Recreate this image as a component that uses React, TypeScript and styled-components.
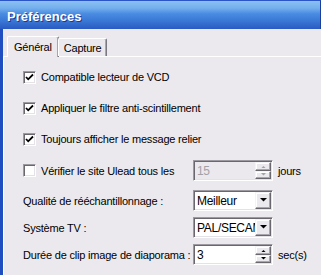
import React from "react";
import styled, { createGlobalStyle } from "styled-components";

const GlobalStyle = createGlobalStyle`
  html, body {
    margin: 0;
    padding: 0;
    overflow: hidden;
    background: #ebe9ed;
  }
  * {
    box-sizing: border-box;
  }
`;

const Window = styled.div`
  width: 321px;
  height: 275px;
  display: flex;
  flex-direction: column;
  background: #ebe9ed;
  font-family: "Liberation Sans", Arial, sans-serif;
  font-size: 11px;
  letter-spacing: -0.2px;
  color: #000;
  overflow: hidden;
`;

const TitleBar = styled.div`
  height: 29px;
  flex: 0 0 29px;
  display: flex;
  align-items: center;
  padding: 3px 0 0 7px;
  border-top: 1px solid #2a55c6;
  border-right: 1px solid #1c3f9e;
  background: linear-gradient(
    180deg,
    #8cc0f2 0%,
    #74b0ee 25%,
    #4a8ce2 45%,
    #3a78d6 70%,
    #2a5ac2 100%
  );
`;

const TitleText = styled.span`
  font-family: "Liberation Sans", Arial, sans-serif;
  font-weight: bold;
  font-size: 13px;
  letter-spacing: 0;
  color: #ffffff;
  text-shadow: 1px 1px 0 #1a3a94;
`;

const Body = styled.div`
  flex: 1;
  display: flex;
  flex-direction: column;
  padding-top: 7px;
  border-left: 3px solid #1f4ec0;
`;

const TabStrip = styled.div`
  display: flex;
  align-items: flex-end;
  padding-left: 4px;
  height: 20px;
  position: relative;
  z-index: 1;
`;

const Tab = styled.div<{ $active?: boolean }>`
  display: flex;
  align-items: center;
  justify-content: center;
  height: ${(p) => (p.$active ? "21px" : "18px")};
  margin-bottom: ${(p) => (p.$active ? "-1px" : "0")};
  padding: ${(p) => (p.$active ? "0 6px 1px 6px" : "0 5px")};
  background: #ebe9ed;
  border-top: 1px solid #ffffff;
  border-left: 1px solid #ffffff;
  border-right: 1px solid #7a7880;
  box-shadow: inset -1px 0 0 #a8a6ac;
  border-radius: 2px 2px 0 0;
  margin-left: ${(p) => (p.$active ? "0" : "-1px")};
`;

const Panel = styled.div`
  flex: 1;
  border-top: 1px solid #ffffff;
  border-left: 1px solid #ffffff;
  padding: 10px 0 0 19px;
  display: flex;
  flex-direction: column;
`;

const Section = styled.div<{ $gap: number; $top?: number }>`
  display: flex;
  flex-direction: column;
  gap: ${(p) => p.$gap}px;
  margin-top: ${(p) => p.$top ?? 0}px;
`;

const CheckRow = styled.label`
  display: flex;
  align-items: center;
  gap: 5px;
  height: 20px;
  white-space: nowrap;
`;

const FormRow = styled.div`
  display: grid;
  grid-template-columns: 165px 80px auto;
  column-gap: 5px;
  align-items: center;
  height: 21px;
`;

const RowLabel = styled.span`
  white-space: nowrap;
`;

const Box = styled.span`
  width: 13px;
  height: 13px;
  flex: 0 0 13px;
  display: flex;
  align-items: center;
  justify-content: center;
  background: #ffffff;
  border: 1px solid;
  border-color: #9c9aa0 #ffffff #ffffff #9c9aa0;
  box-shadow: inset 1px 1px 0 #6a686e, inset -1px -1px 0 #e4e2e6;
`;

const Sunken = styled.div<{ $disabled?: boolean }>`
  height: 21px;
  width: 80px;
  display: flex;
  align-items: stretch;
  background: ${(p) => (p.$disabled ? "#ebe9ed" : "#ffffff")};
  border: 1px solid;
  border-color: #9c9aa0 #ffffff #ffffff #9c9aa0;
  box-shadow: inset 1px 1px 0 #6a686e, inset -1px -1px 0 #e4e2e6;
  padding: 1px;
`;

const FieldText = styled.span<{ $disabled?: boolean }>`
  flex: 1;
  min-width: 0;
  overflow: hidden;
  white-space: nowrap;
  padding: 2px 0 0 2px;
  font-size: 12px;
  letter-spacing: -0.3px;
  color: ${(p) => (p.$disabled ? "#a3a1a7" : "#000")};
`;

const RaisedButton = styled.span`
  width: 16px;
  flex: 0 0 16px;
  display: flex;
  align-items: center;
  justify-content: center;
  background: #ebe9ed;
  border: 1px solid;
  border-color: #f4f3f5 #6a686e #6a686e #f4f3f5;
  box-shadow: inset -1px -1px 0 #a8a6ac, inset 1px 1px 0 #ffffff;
`;

const SpinButtons = styled.span`
  width: 16px;
  flex: 0 0 16px;
  display: flex;
  flex-direction: column;

  & > span {
    flex: 1;
  }
`;

const Unit = styled.span`
  white-space: nowrap;
`;

const Check = () => (
  <svg width="9" height="9" viewBox="0 0 9 9">
    <path d="M1 4 L3.2 6.3 L8 1.5" fill="none" stroke="#000" strokeWidth="1.8" />
  </svg>
);

const Arrow = ({ dir, size, color }: { dir: "up" | "down"; size: number; color: string }) => (
  <svg width={size} height={size / 2 + 1} viewBox={`0 0 ${size} ${size / 2 + 1}`}>
    {dir === "down" ? (
      <polygon points={`0,0 ${size},0 ${size / 2},${size / 2}`} fill={color} />
    ) : (
      <polygon points={`0,${size / 2 + 1} ${size},${size / 2 + 1} ${size / 2},1`} fill={color} />
    )}
  </svg>
);

const Combo = ({ value }: { value: string }) => (
  <Sunken>
    <FieldText>{value}</FieldText>
    <RaisedButton>
      <Arrow dir="down" size={7} color="#000" />
    </RaisedButton>
  </Sunken>
);

const Spin = ({ value, disabled }: { value: string; disabled?: boolean }) => {
  const c = disabled ? "#a3a1a7" : "#000";
  return (
    <Sunken $disabled={disabled}>
      <FieldText $disabled={disabled}>{value}</FieldText>
      <SpinButtons>
        <RaisedButton>
          <Arrow dir="up" size={5} color={c} />
        </RaisedButton>
        <RaisedButton>
          <Arrow dir="down" size={5} color={c} />
        </RaisedButton>
      </SpinButtons>
    </Sunken>
  );
};

const checks = [
  "Compatible lecteur de VCD",
  "Appliquer le filtre anti-scintillement",
  "Toujours afficher le message relier",
];

export default function App() {
  return (
    <>
      <GlobalStyle />
      <Window>
        <TitleBar>
          <TitleText>Préférences</TitleText>
        </TitleBar>
        <Body>
          <TabStrip>
            <Tab $active>Général</Tab>
            <Tab>Capture</Tab>
          </TabStrip>
          <Panel>
            <Section $gap={11}>
              {checks.map((label) => (
                <CheckRow key={label}>
                  <Box>
                    <Check />
                  </Box>
                  {label}
                </CheckRow>
              ))}
              <FormRow>
                <CheckRow>
                  <Box />
                  Vérifier le site Ulead tous les
                </CheckRow>
                <Spin value="15" disabled />
                <Unit>jours</Unit>
              </FormRow>
            </Section>
            <Section $gap={6} $top={9}>
              <FormRow>
                <RowLabel>Qualité de rééchantillonnage :</RowLabel>
                <Combo value="Meilleur" />
              </FormRow>
              <FormRow>
                <RowLabel>Système TV :</RowLabel>
                <Combo value="PAL/SECAM" />
              </FormRow>
              <FormRow>
                <RowLabel>Durée de clip image de diaporama :</RowLabel>
                <Spin value="3" />
                <Unit>sec(s)</Unit>
              </FormRow>
            </Section>
          </Panel>
        </Body>
      </Window>
    </>
  );
}
